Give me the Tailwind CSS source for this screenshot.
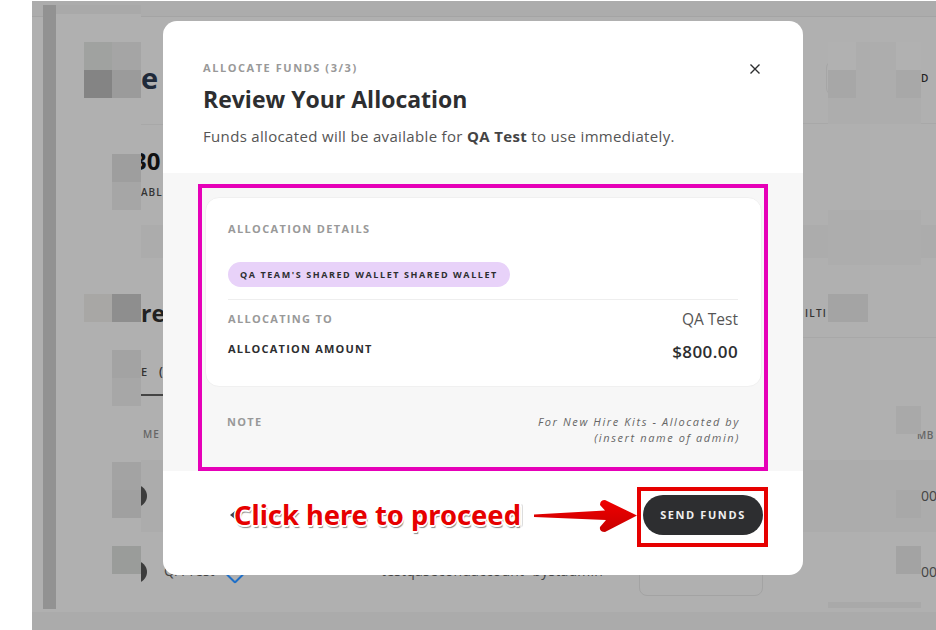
<!DOCTYPE html>
<html lang="en">
<head>
<meta charset="utf-8">
<script src="https://cdn.jsdelivr.net/npm/@tailwindcss/browser@4"></script>
</head>
<body class="bg-white">
<div class="relative w-[936px] h-[630px] overflow-hidden bg-white font-['Open_Sans','Liberation_Sans',sans-serif]">
  <!-- dimmed page behind the dialog -->
  <div class="absolute left-[32px] top-[1px] right-0 bottom-0 bg-[#b0b0b0] flex flex-col">
    <div class="h-[16px] bg-[#acacac] border-b border-[#a4a4a4]"></div>
    <div class="flex-1"></div>
    <div class="h-[18px] bg-[#ababab]"></div>
  </div>

  <!-- fragments of the page peeking round the dialog -->
  <div class="absolute left-[141px] top-[124px] w-[22px] h-[1px] bg-[#a8a8a8]"></div>
  <div class="absolute left-[141px] top-[225px] w-[22px] h-[33px] bg-[#acacac]"></div>
  <div class="absolute left-[141px] top-[460px] w-[22px] h-[72px] bg-[#acacac]"></div>
  <div class="absolute left-[803px] top-[225px] w-[133px] h-[33px] bg-[#acacac]"></div>
  <div class="absolute left-[803px] top-[460px] w-[133px] h-[72px] bg-[#acacac]"></div>
  <div class="absolute left-[803px] top-[337px] w-[133px] h-[1px] bg-[#a8a8a8]"></div>
  <div class="absolute left-[803px] top-[123px] w-[133px] h-[1px] bg-[#a8a8a8]"></div>
  <div class="absolute left-[826px] top-[60px] w-[40px] h-[36px] rounded-[8px] border border-[#a6a6a6]"></div>
  <span class="absolute left-[141px] top-[60px] text-[29px] leading-[36px] font-bold text-[#1f2a3a]">e</span>
  <span class="absolute left-[133px] top-[146px] text-[24px] leading-[30px] font-bold text-[#111]">30</span>
  <span class="absolute left-[141px] top-[185px] text-[10px] leading-[14px] font-semibold tracking-[1px] text-[#333]">ABL</span>
  <span class="absolute left-[141px] top-[298px] text-[23px] leading-[30px] font-bold text-[#222]">re</span>
  <span class="absolute left-[141px] top-[364px] text-[11px] leading-[16px] font-semibold text-[#333]">E</span>
  <span class="absolute left-[159px] top-[364px] text-[12px] leading-[16px] font-semibold text-[#333]">(</span>
  <div class="absolute left-[141px] top-[394px] w-[22px] h-[2px] bg-[#444]"></div>
  <span class="absolute left-[143px] top-[427px] text-[10px] leading-[14px] font-semibold tracking-[1px] text-[#666]">ME</span>
  <div class="absolute left-[125px] top-[485px] w-[22px] h-[22px] rounded-full bg-[#3c3c3c]"></div>
  <div class="absolute left-[125px] top-[561px] w-[22px] h-[22px] rounded-full bg-[#3c3c3c]"></div>
  <span class="absolute left-[921px] top-[70px] text-[10px] leading-[16px] font-semibold text-[#222]">D</span>
  <span class="absolute left-[805px] top-[305px] text-[10px] leading-[16px] font-semibold tracking-[1.2px] text-[#333]">ILTI</span>
  <span class="absolute left-[917px] top-[428px] text-[10px] leading-[14px] font-semibold tracking-[0.5px] text-[#666]">MB</span>
  <span class="absolute left-[921px] top-[486px] text-[14px] leading-[20px] text-[#444]">00</span>
  <span class="absolute left-[921px] top-[562px] text-[14px] leading-[20px] text-[#444]">00</span>
  <span class="absolute left-[164px] top-[561px] text-[14px] leading-[20px] text-[#444]">QA Test</span>
  <div class="absolute left-[228px] top-[567px] w-[14px] h-[14px] rotate-45 rounded-[2px] border-2 border-[#1e6fc8]"></div>
  <span class="absolute left-[381px] top-[561px] text-[14px] leading-[20px] tracking-[0.2px] text-[#444]">testqasecondaccount+bystadmin</span>
  <div class="absolute left-[639px] top-[546px] w-[124px] h-[50px] rounded-[8px] border border-[#a3a3a3] flex items-center justify-center">
    <span class="text-[13px] text-[#444]">Wallet Admin</span>
  </div>

  <!-- pixelated patches -->
  <div class="absolute left-[56px] top-[14px] w-[85px] h-[595px] bg-[#b0b0b0]"></div>
  <div class="absolute left-[43px] top-[5px] w-[13px] h-[604px] bg-[#929292]"></div>
  <div class="absolute left-[56px] top-[5px] w-[85px] h-[9px] bg-[#a9a9a9]"></div>
  <div class="absolute left-[84px] top-[42px] w-[28px] h-[28px] bg-[#a0a2a0]"></div>
  <div class="absolute left-[112px] top-[42px] w-[29px] h-[28px] bg-[#a5a5a5]"></div>
  <div class="absolute left-[84px] top-[70px] w-[28px] h-[28px] bg-[#848484]"></div>
  <div class="absolute left-[112px] top-[70px] w-[29px] h-[28px] bg-[#9b9b9b]"></div>
  <div class="absolute left-[112px] top-[154px] w-[29px] h-[28px] bg-[#9e9e9e]"></div>
  <div class="absolute left-[112px] top-[182px] w-[29px] h-[28px] bg-[#a6a6a6]"></div>
  <div class="absolute left-[84px] top-[294px] w-[28px] h-[28px] bg-[#a8a7a5]"></div>
  <div class="absolute left-[112px] top-[294px] w-[29px] h-[28px] bg-[#8e8e8e]"></div>
  <div class="absolute left-[112px] top-[350px] w-[29px] h-[28px] bg-[#a3a3a3]"></div>
  <div class="absolute left-[112px] top-[378px] w-[29px] h-[28px] bg-[#a7a7a7]"></div>
  <div class="absolute left-[112px] top-[462px] w-[29px] h-[28px] bg-[#a3a3a3]"></div>
  <div class="absolute left-[112px] top-[490px] w-[29px] h-[28px] bg-[#a0a0a0]"></div>
  <div class="absolute left-[112px] top-[546px] w-[29px] h-[28px] bg-[#9a9c9a]"></div>
  <div class="absolute left-[828px] top-[42px] w-[93px] h-[82px] bg-[#adadad]"></div>
  <div class="absolute left-[828px] top-[42px] w-[28px] h-[28px] bg-[#b1b1b1]"></div>
  <div class="absolute left-[896px] top-[42px] w-[25px] h-[28px] bg-[#b1b1b1]"></div>
  <div class="absolute left-[828px] top-[70px] w-[28px] h-[28px] bg-[#a7a7a7]"></div>
  <div class="absolute left-[896px] top-[70px] w-[25px] h-[28px] bg-[#a8a8a8]"></div>
  <div class="absolute left-[828px] top-[210px] w-[93px] h-[55px] bg-[#adadad]"></div>
  <div class="absolute left-[828px] top-[294px] w-[40px] h-[28px] bg-[#a4a4a4]"></div>
  <div class="absolute left-[896px] top-[406px] w-[25px] h-[28px] bg-[#a9a9a9]"></div>
  <div class="absolute left-[896px] top-[490px] w-[25px] h-[28px] bg-[#a8a8a8]"></div>
  <div class="absolute left-[896px] top-[546px] w-[25px] h-[28px] bg-[#a3a3a3]"></div>
  <div class="absolute left-[828px] top-[602px] w-[93px] h-[6px] bg-[#a9a9a9]"></div>

  <!-- dialog -->
  <section class="absolute left-[163px] top-[21px] w-[640px] h-[554px] rounded-[14px] bg-white flex flex-col overflow-hidden">
    <header class="relative h-[152px] px-[40px] pt-[39px] shrink-0">
      <p class="text-[11px] leading-[16px] font-bold tracking-[1.55px] text-[#999]">ALLOCATE FUNDS (3/3)</p>
      <h2 class="mt-[7px] text-[23px] leading-[32px] font-bold text-[#2d2e30]">Review Your Allocation</h2>
      <p class="mt-[10px] text-[15px] leading-[22px] tracking-[0.33px] text-[#555]">Funds allocated will be available for <b class="font-bold text-[#444]">QA Test</b> to use immediately.</p>
      <svg class="absolute left-[586px] top-[42px]" width="12" height="12" viewBox="0 0 12 12" fill="none" stroke="#2d2e30" stroke-width="1.4" aria-label="Close"><path d="M1.5 1.5l9 9M10.5 1.5l-9 9"/></svg>
    </header>

    <div class="h-[298px] bg-[#f7f7f7] relative shrink-0 px-[42px] pt-[24px]">
      <div class="bg-white rounded-[14px] border border-[#f0f0f0] h-[190px] pl-[22px] pr-[23px] pt-[23px] w-[557px]">
        <p class="text-[11px] leading-[16px] font-bold tracking-[1.35px] text-[#999]">ALLOCATION DETAILS</p>
        <div class="mt-[25px] flex pb-[12px] border-b border-[#eeeeee]">
          <span class="inline-flex items-center h-[25px] px-[12px] rounded-full bg-[#e8d2f9] text-[9px] font-bold tracking-[1.58px] text-[#2d2e30]">QA TEAM'S SHARED WALLET SHARED WALLET</span>
        </div>
        <div class="flex justify-between items-center mt-[8px] h-[24px]">
          <span class="mt-[-2px] text-[11px] font-bold tracking-[1.3px] text-[#999]">ALLOCATING TO</span>
          <span class="text-[15.5px] text-[#555]">QA Test</span>
        </div>
        <div class="flex justify-between items-start mt-[8px]">
          <span class="text-[11px] leading-[18px] font-bold tracking-[1.2px] text-[#2d2e30]">ALLOCATION AMOUNT</span>
          <span class="text-[17px] leading-[24px] font-semibold tracking-[0.4px] text-[#2d2e30]">$800.00</span>
        </div>
      </div>
      <div class="flex justify-between mt-[27px] pl-[22px] pr-[23px] w-[558px]">
        <span class="text-[11px] leading-[16px] font-bold tracking-[1.3px] text-[#999]">NOTE</span>
        <span class="text-right text-[11px] leading-[16px] italic tracking-[1.6px] text-[#666]">For New Hire Kits - Allocated by<br>(insert name of admin)</span>
      </div>
    </div>

    <footer class="relative flex-1 flex items-start justify-end pt-[24px] pr-[40px]">
      <svg class="absolute left-[67px] top-[40px]" width="5" height="8" viewBox="0 0 5 8" aria-hidden="true"><path d="M5 0L0 4l5 4z" fill="#444"/></svg>
      <div class="absolute left-[345px] top-[32px] w-[15px] h-[25px] rounded-r-[4px] border-r border-b border-t border-r-[#ddd] border-y-transparent"></div>
      <button class="w-[120px] h-[40px] rounded-full bg-[#2d2e30] text-[11px] font-bold tracking-[1.6px] text-[#f0f0f0]">SEND FUNDS</button>
    </footer>
  </section>

  <!-- annotations on top of the screenshot -->
  <div class="absolute left-[198px] top-[184px] w-[570px] h-[287px] border-4 border-[#e600b8]"></div>
  <div class="absolute left-[637px] top-[487px] w-[131px] h-[60px] border-4 border-[#e60000]"></div>
  <span class="absolute left-[234px] top-[496px] font-['Noto_Sans',sans-serif] text-[27.3px] leading-[38px] font-bold text-[#e60000] [text-shadow:1.5px_0_0_#fff,-1.5px_0_0_#fff,0_-1.5px_0_#fff,0_1.5px_0_#fff,1px_1px_0_#fff,-1px_-1px_0_#fff,1px_-1px_0_#fff,-1px_1px_0_#fff,1px_2.5px_1px_#888]">Click here to proceed</span>
  <svg class="absolute left-[533px] top-[498px]" width="104" height="36" viewBox="0 0 104 36" aria-hidden="true">
    <defs><linearGradient id="a" x1="0" y1="0" x2="0" y2="1"><stop offset="0" stop-color="#f00000"/><stop offset="1" stop-color="#c80000"/></linearGradient></defs>
    <path d="M1 16.5 L72 12.5 L67 7 Q67 2 72 2 L104 17.5 L72 34 Q66 34 67 29 L73 22 L1 19 Z" fill="url(#a)"/>
  </svg>
</div>
</body>
</html>
